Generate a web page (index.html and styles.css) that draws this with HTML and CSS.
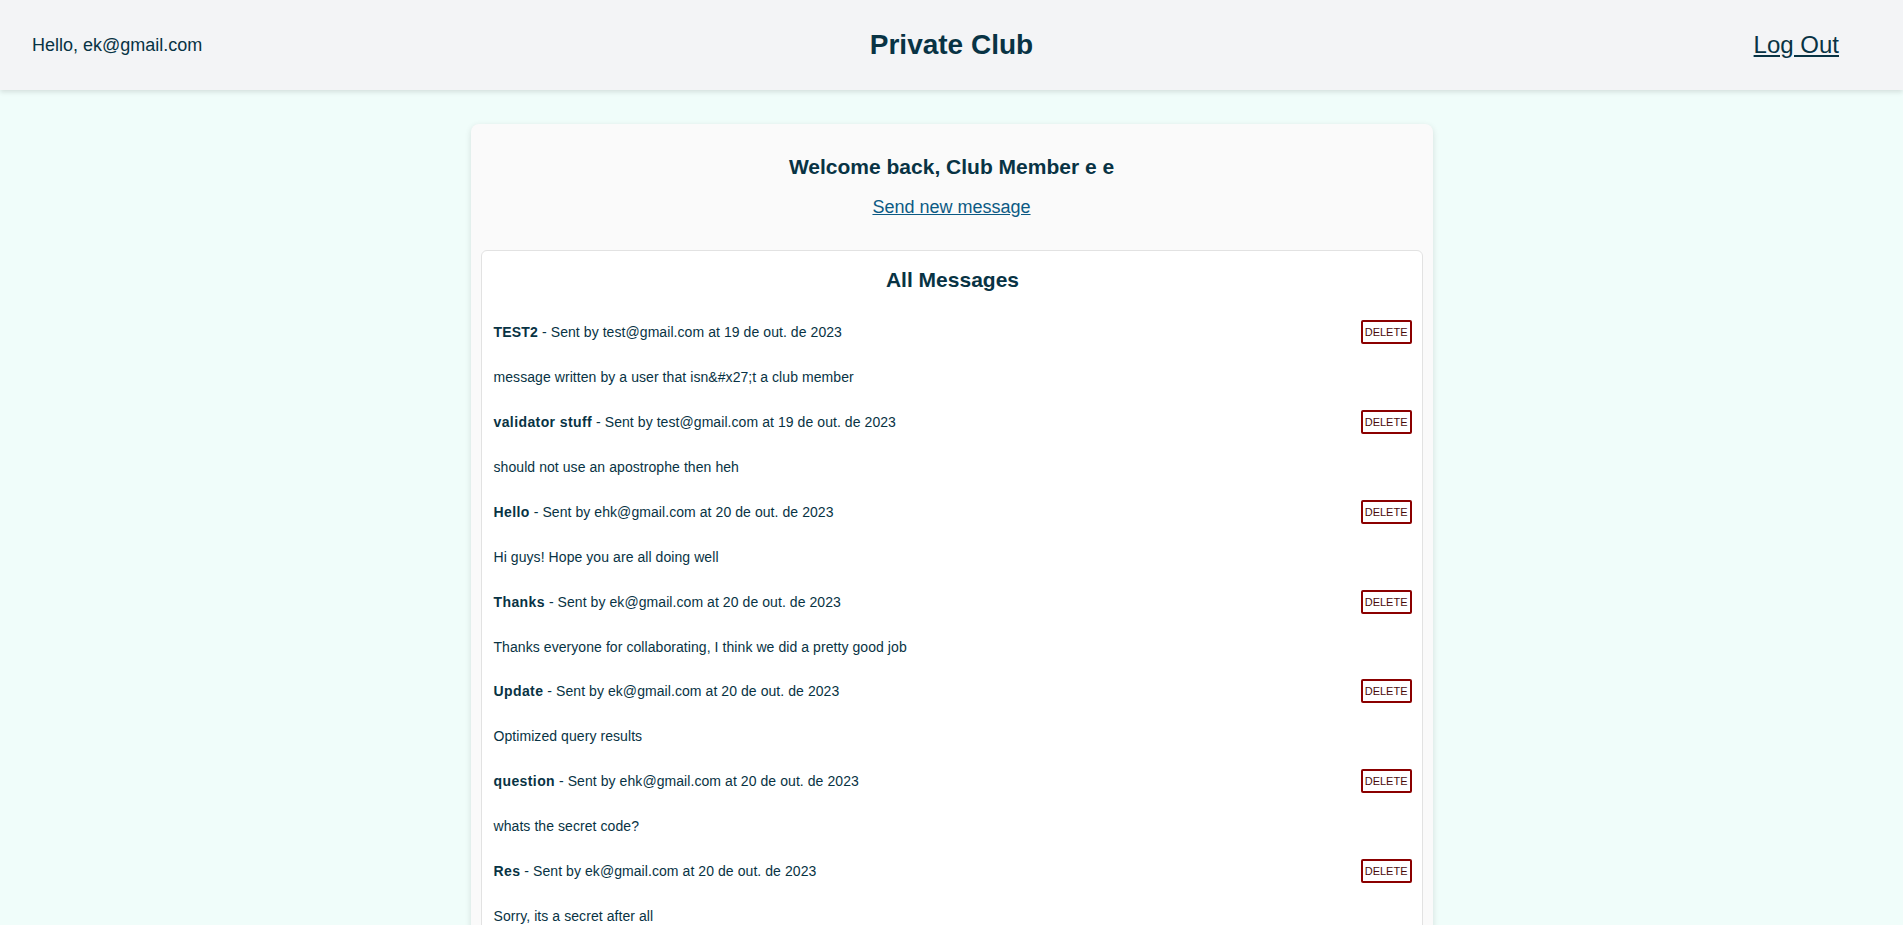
FILE: index.html
```html
<!DOCTYPE html>
<html lang="en">
<head>
<meta charset="utf-8">
<title>Private Club</title>
<link rel="stylesheet" href="styles.css">
</head>
<body>
<header class="topbar">
  <div class="greeting">Hello, ek@gmail.com</div>
  <h1 class="brand">Private Club</h1>
  <div class="actions"><a class="logout" href="#">Log Out</a></div>
</header>
<main class="panel">
  <section class="welcome">
    <h2 class="welcome-title">Welcome back, Club Member e e</h2>
    <a class="new-link" href="#">Send new message</a>
  </section>
  <section class="messages">
    <h2 class="messages-title">All Messages</h2>
    <ul class="message-list">
      <li class="message">
        <div class="message-head"><span class="meta"><strong class="caps">TEST2</strong> - Sent by test@gmail.com at 19 de out. de 2023</span><button class="delete">DELETE</button></div>
        <p class="message-body">message written by a user that isn&amp;#x27;t a club member</p>
      </li>
      <li class="message">
        <div class="message-head"><span class="meta"><strong>validator stuff</strong> - Sent by test@gmail.com at 19 de out. de 2023</span><button class="delete">DELETE</button></div>
        <p class="message-body">should not use an apostrophe then heh</p>
      </li>
      <li class="message">
        <div class="message-head"><span class="meta"><strong>Hello</strong> - Sent by ehk@gmail.com at 20 de out. de 2023</span><button class="delete">DELETE</button></div>
        <p class="message-body">Hi guys! Hope you are all doing well</p>
      </li>
      <li class="message">
        <div class="message-head"><span class="meta"><strong>Thanks</strong> - Sent by ek@gmail.com at 20 de out. de 2023</span><button class="delete">DELETE</button></div>
        <p class="message-body">Thanks everyone for collaborating, I think we did a pretty good job</p>
      </li>
      <li class="message">
        <div class="message-head"><span class="meta"><strong>Update</strong> - Sent by ek@gmail.com at 20 de out. de 2023</span><button class="delete">DELETE</button></div>
        <p class="message-body">Optimized query results</p>
      </li>
      <li class="message">
        <div class="message-head"><span class="meta"><strong>question</strong> - Sent by ehk@gmail.com at 20 de out. de 2023</span><button class="delete">DELETE</button></div>
        <p class="message-body">whats the secret code?</p>
      </li>
      <li class="message">
        <div class="message-head"><span class="meta"><strong>Res</strong> - Sent by ek@gmail.com at 20 de out. de 2023</span><button class="delete">DELETE</button></div>
        <p class="message-body">Sorry, its a secret after all</p>
      </li>
    </ul>
  </section>
</main>
</body>
</html>
```
FILE: styles.css
```css
* { box-sizing: border-box; }

html, body {
  margin: 0;
  padding: 0;
}

body {
  background: #f0fdfa;
  color: #083344;
  font-family: "Liberation Sans", Arial, sans-serif;
}

.topbar {
  height: 90px;
  background: #f3f4f6;
  box-shadow: 0 2px 5px rgba(0, 0, 0, 0.12);
  display: grid;
  grid-template-columns: 1fr auto 1fr;
  align-items: center;
  padding: 0 32px;
}

.greeting {
  font-size: 18px;
  justify-self: start;
}

.brand {
  margin: 0;
  font-size: 28px;
  font-weight: bold;
  line-height: 32px;
}

.actions {
  justify-self: end;
  margin-right: 32px;
}

.logout {
  font-size: 24px;
  color: #083344;
  text-decoration: underline;
}

.panel {
  width: 962px;
  margin: 34px auto 0;
  background: #fafafa;
  border-radius: 8px;
  box-shadow: 0 2px 6px rgba(0, 0, 0, 0.12);
  padding: 0 10px 10px;
}

.welcome {
  display: flex;
  flex-direction: column;
  align-items: center;
  padding-top: 31px;
}

.welcome-title {
  margin: 0;
  font-size: 21px;
  line-height: 24px;
  font-weight: bold;
}

.new-link {
  margin-top: 17.5px;
  font-size: 18px;
  line-height: 21px;
  color: #0c5a84;
}

.messages {
  margin-top: 32.5px;
  background: #ffffff;
  border: 1px solid #e2e2e2;
  border-radius: 6px;
  padding: 17px 10px 20px 12px;
}

.messages-title {
  margin: 0;
  text-align: center;
  font-size: 21px;
  line-height: 24px;
  font-weight: bold;
}

.message-list {
  list-style: none;
  margin: 28.3px 0 0;
  padding: 0;
}

.message-head {
  display: flex;
  justify-content: space-between;
  align-items: center;
  height: 24px;
  font-size: 14px;
  line-height: 16px;
  letter-spacing: 0.07px;
}

.meta strong {
  font-weight: bold;
  letter-spacing: 0.4px;
}

.meta strong.caps {
  letter-spacing: 0.2px;
}

.delete {
  font-family: "Liberation Sans", Arial, sans-serif;
  font-size: 11px;
  line-height: 14px;
  padding: 3px 2px;
  border: 2px solid #8b0000;
  border-radius: 2px;
  background: #ffffff;
  color: #4a0a0a;
  letter-spacing: 0;
  cursor: pointer;
}

.message-body {
  margin: 24.9px 0;
  font-size: 14px;
  line-height: 16px;
  letter-spacing: 0.07px;
}
```
